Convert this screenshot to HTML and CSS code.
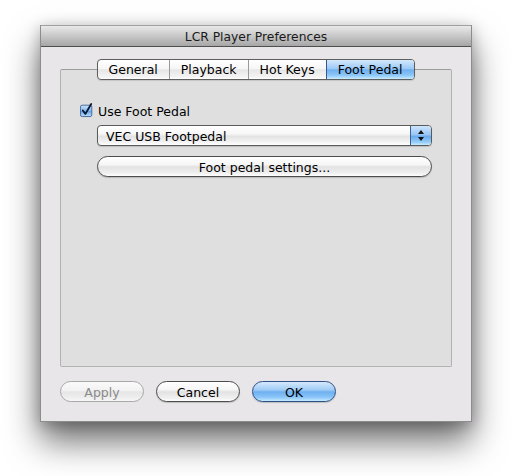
FILE: index.html
```html
<!DOCTYPE html>
<html>
<head>
<meta charset="utf-8">
<title>LCR Player Preferences</title>
<link rel="stylesheet" href="styles.css">
</head>
<body>
<div class="window">
  <div class="titlebar">LCR Player Preferences</div>
  <div class="content">
    <div class="tabs-area">
      <div class="tabs">
        <div class="tab first">General</div>
        <div class="tab">Playback</div>
        <div class="tab">Hot Keys</div>
        <div class="tab last selected">Foot Pedal</div>
      </div>
      <div class="panel">
        <div class="check-row">
          <span class="checkbox">
            <svg width="16" height="16" viewBox="0 0 16 16">
              <defs>
                <linearGradient id="cb" x1="0" y1="0" x2="0" y2="1">
                  <stop offset="0" stop-color="#cfe4fb"/>
                  <stop offset="0.5" stop-color="#7fb6ef"/>
                  <stop offset="0.52" stop-color="#5fa0e8"/>
                  <stop offset="1" stop-color="#bfe0ff"/>
                </linearGradient>
              </defs>
              <rect x="0.5" y="2.5" width="13" height="13" rx="2" fill="url(#cb)" stroke="#3d5f95"/>
              <path d="M3.2 8.6 L6.2 12.4 L12.8 1.2" fill="none" stroke="#0d1830" stroke-width="2.1" stroke-linecap="round" stroke-linejoin="round"/>
            </svg>
          </span>
          <span class="check-label">Use Foot Pedal</span>
        </div>
        <div class="popup">
          <span class="popup-label">VEC USB Footpedal</span>
          <span class="stepper">
            <svg width="8" height="13" viewBox="0 0 8 13">
              <path d="M4 1 L7 5 L1 5 Z" fill="#111"/>
              <path d="M4 12 L7 8 L1 8 Z" fill="#111"/>
            </svg>
          </span>
        </div>
        <div class="btn wide">Foot pedal settings...</div>
      </div>
    </div>
    <div class="buttons">
      <div class="btn disabled">Apply</div>
      <div class="btn">Cancel</div>
      <div class="btn default">OK</div>
    </div>
  </div>
</div>
</body>
</html>
```

FILE: styles.css
```css
html {
  background: #ffffff;
}

body {
  margin: 0;
  min-height: 100vh;
  padding-top: 25px;
  box-sizing: border-box;
  background: #ffffff;
  font-family: "DejaVu Sans", "Lucida Grande", sans-serif;
  font-size: 12.5px;
  color: #000;
}

.window {
  margin: 0 0 0 40px;
  width: 432px;
  height: 397px;
  box-sizing: border-box;
  border: 1px solid #8c8c8c;
  border-top-color: #a0a0a0;
  background: #e8e6e8;
  box-shadow: 0 20px 32px rgba(0, 0, 0, 0.55), 0 3px 14px rgba(0, 0, 0, 0.25);
  display: flex;
  flex-direction: column;
}

.titlebar {
  line-height: 20px;
  padding-top: 1px;
  box-sizing: border-box;
  height: 21px;
  border-bottom: 1px solid #4f4f4f;
  background: linear-gradient(#e9e9e9, #c8c8c8 50%, #a6a6a6);
  text-align: center;
  color: #1a1a1a;
  font-size: 12.3px;
}

.content {
  flex: 1;
  padding: 12px 19px 0 19px;
  display: flex;
  flex-direction: column;
}

.tabs-area {
  display: flex;
  flex-direction: column;
  align-items: center;
}

.tabs {
  display: flex;
  height: 21px;
  box-sizing: border-box;
  position: relative;
  z-index: 1;
  border: 1px solid #5e5e5e;
  border-radius: 4px;
  background: linear-gradient(#ffffff, #f6f6f6 45%, #e6e6e6 52%, #f4f4f4 90%, #ffffff);
  overflow: hidden;
  box-shadow: 0 1px 1px rgba(0, 0, 0, 0.12);
}

.tab {
  line-height: 19px;
  padding: 0 11px;
  border-left: 1px solid #9a9a9a;
}

.tab.first {
  border-left: none;
}

.tab.selected {
  padding: 0 12px 0 11px;
  border-left: 1px solid #37578e;
  background: linear-gradient(#d4e8fc, #9ccaf6 45%, #6fb0f0 52%, #8cc6f8 80%, #c8ecff);
}

.panel {
  align-self: stretch;
  margin-top: -11px;
  height: 298px;
  box-sizing: border-box;
  border: 1px solid #b2b2b2;
  border-top-color: #9c9c9c;
  border-radius: 2px;
  background: #dfdfdf;
  padding: 33px 19px 0 19px;
  display: flex;
  flex-direction: column;
}

.check-row {
  display: flex;
  align-items: center;
  height: 16px;
}

.checkbox {
  width: 14px;
  height: 16px;
  display: flex;
  margin-top: -3px;
}

.check-label {
  margin-left: 4px;
}

.popup {
  margin: 6px 0 0 17px;
  height: 21px;
  box-sizing: border-box;
  border: 1px solid #5a5a5a;
  border-radius: 4px;
  display: flex;
  overflow: hidden;
  background: linear-gradient(#ffffff, #f7f7f7 40%, #e3e3e3 55%, #f3f3f3 85%, #ffffff);
  box-shadow: 0 1px 1px rgba(0, 0, 0, 0.15);
}

.popup-label {
  flex: 1;
  line-height: 19px;
  padding: 1px 0 0 8px;
}

.stepper {
  width: 20px;
  border-left: 1px solid #3d5f95;
  background: linear-gradient(#cfe5fc, #97c6f5 45%, #6aaaee 55%, #96cdf9 85%, #c8ecff);
  display: flex;
  align-items: center;
  justify-content: center;
}

.btn {
  height: 21px;
  box-sizing: border-box;
  border: 1px solid #4c4c4c;
  border-radius: 11px;
  line-height: 19px;
  padding-top: 1px;
  text-align: center;
  background: linear-gradient(#ffffff, #f6f6f6 40%, #e2e2e2 52%, #f0f0f0 85%, #ffffff);
  box-shadow: 0 1px 1px rgba(0, 0, 0, 0.18);
}

.btn.wide {
  margin: 10px 0 0 17px;
}

.buttons {
  margin-top: 14px;
  display: flex;
  gap: 12px;
}

.buttons .btn {
  width: 84px;
}

.btn.disabled {
  color: #8a8a8a;
  border-color: #a8a8a8;
  background: linear-gradient(#fafafa, #f2f2f2 45%, #e6e6e6 52%, #efefef 85%, #f8f8f8);
  box-shadow: none;
}

.btn.default {
  border-color: #2f4f88;
  background: linear-gradient(#d6e9fc, #9fccf6 42%, #6eaff0 52%, #8ac5f8 80%, #c6ebff);
}
```
